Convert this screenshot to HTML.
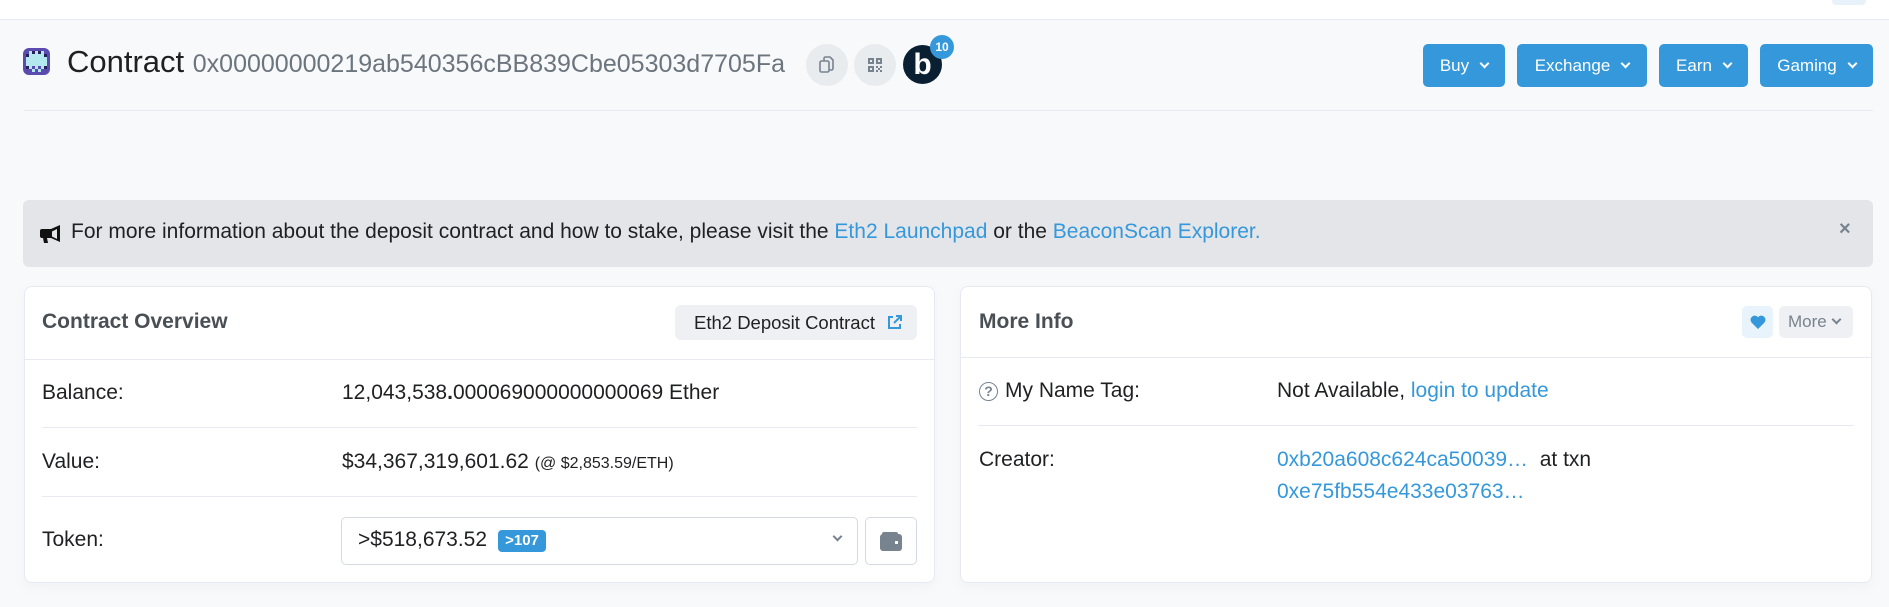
<!DOCTYPE html>
<html><head><meta charset="utf-8"><style>
*{box-sizing:border-box;margin:0;padding:0}
body{width:1889px;height:607px;overflow:hidden;background:#f8f9fa;font-family:"Liberation Sans",Arial,sans-serif;color:#1e2022;position:relative}
.abs{position:absolute}
a{color:#3498db;text-decoration:none}
.top{left:0;top:0;width:1889px;height:20px;background:#fff;border-bottom:1px solid #e7eaf3}
.circ{border-radius:50%;background:#e9ecef;width:42px;height:42px;top:44px;display:flex;align-items:center;justify-content:center}
.btn{top:44px;height:43px;background:#3498db;color:#fff;border-radius:5px;font-size:17px;display:flex;align-items:center;justify-content:center}
.btn span.c{display:inline-block;width:7px;height:7px;border-right:2px solid #fff;border-bottom:2px solid #fff;transform:rotate(45deg);margin-left:12px;margin-top:-5px}
.card{background:#fff;border:1px solid #e7eaf3;border-radius:8px;top:286px;height:297px;box-shadow:0 4px 10px rgba(151,164,175,.08)}
.hd{font-weight:bold;font-size:21px;color:#4a4f55}
.lbl{font-size:21px}
.line{height:1px;background:#e7eaf3}
</style></head><body>
<div class="abs top"></div>
<div class="abs" style="left:1832px;top:0;width:34px;height:5px;background:#e8f2fb;border-radius:0 0 4px 4px"></div>

<svg class="abs" style="left:23px;top:48px" width="27" height="27" viewBox="0 0 9 9">
<rect width="9" height="9" rx="2" fill="#5a4bb0"/>
<rect x="2" y="1" width="5" height="7" fill="#b2e8ee"/>
<rect x="1" y="2" width="7" height="5" fill="#b2e8ee"/>
<rect x="3" y="1" width="1" height="1" fill="#2a1f5c"/><rect x="5" y="1" width="1" height="1" fill="#2a1f5c"/>
<rect x="1" y="2" width="1" height="1" fill="#2a1f5c"/><rect x="7" y="2" width="1" height="1" fill="#2a1f5c"/>
<rect x="1" y="6" width="1" height="1" fill="#2a1f5c"/><rect x="7" y="6" width="1" height="1" fill="#2a1f5c"/>
<rect x="3" y="6" width="1" height="1" fill="#5a4bb0"/><rect x="5" y="6" width="1" height="1" fill="#5a4bb0"/>
<rect x="4" y="7" width="1" height="1" fill="#5a4bb0"/><rect x="2" y="7" width="1" height="1" fill="#5a4bb0"/><rect x="6" y="7" width="1" height="1" fill="#5a4bb0"/>
</svg>
<div class="abs" style="left:67px;top:43px;font-size:31px;color:#1e2022;line-height:38px;white-space:nowrap">Contract <span style="font-size:25px;color:#6c757e">0x00000000219ab540356cBB839Cbe05303d7705Fa</span></div>

<div class="abs circ" style="left:806px"><svg width="16" height="18" viewBox="0 0 16 18" fill="none" stroke="#77838f" stroke-width="1.6"><rect x="1" y="5" width="9" height="11" rx="1.5"/><path d="M5 5V2.5A1.5 1.5 0 0 1 6.5 1H11l3 3v8.5a1.5 1.5 0 0 1-1.5 1.5H10"/></svg></div>
<div class="abs circ" style="left:854px"><svg width="16" height="16" viewBox="0 0 16 16" fill="#77838f"><path d="M1 1h6v6H1zM3 3v2h2V3zM9 1h6v6H9zm2 2v2h2V3zM1 9h6v6H1zm2 2v2h2v-2zM9 9h2v2H9zm4 0h2v2h-2zm-2 2h2v2h-2zm-2 2h2v2H9zm4 0h2v2h-2z"/></svg></div>
<div class="abs" style="left:903px;top:45px;width:39px;height:39px;border-radius:50%;background:#0b1f33;color:#fff;font-size:30px;font-weight:bold;display:flex;align-items:center;justify-content:center;line-height:1">b</div>
<div class="abs" style="left:930px;top:35px;width:24px;height:24px;border-radius:50%;background:#3498db;color:#fff;font-size:12px;font-weight:bold;display:flex;align-items:center;justify-content:center">10</div>

<div class="abs btn" style="left:1423px;width:82px">Buy<span class="c"></span></div>
<div class="abs btn" style="left:1517px;width:130px">Exchange<span class="c"></span></div>
<div class="abs btn" style="left:1659px;width:89px">Earn<span class="c"></span></div>
<div class="abs btn" style="left:1760px;width:113px">Gaming<span class="c"></span></div>
<div class="abs line" style="left:24px;top:110px;width:1849px"></div>

<div class="abs" style="left:23px;top:200px;width:1850px;height:67px;background:#e4e5e9;border-radius:6px"></div>
<svg class="abs" style="left:40px;top:224px" width="24" height="20" viewBox="0 0 24 20"><path d="M20 1v17l-9-4H7l1 5H4l-1-5H2a2 2 0 0 1-2-2V7a2 2 0 0 1 2-2h9z" fill="#111"/><path d="M17 5l-5 2.5v5L17 15z" fill="#e4e5e9"/></svg>
<div class="abs" style="left:71px;top:220px;font-size:21px;white-space:nowrap">For more information about the deposit contract and how to stake, please visit the <a>Eth2 Launchpad</a> or the <a>BeaconScan Explorer.</a></div>
<div class="abs" style="left:1839px;top:218px;font-size:20px;font-weight:bold;color:#77838f">×</div>

<div class="abs card" style="left:24px;width:911px"></div>
<div class="abs hd" style="left:42px;top:310px">Contract Overview</div>
<div class="abs" style="left:675px;top:305px;width:242px;height:35px;background:#eef0f3;border-radius:6px;font-size:18.5px;display:flex;align-items:center;padding-left:19px;white-space:nowrap">Eth2 Deposit Contract
<svg style="margin-left:12px" width="15" height="15" viewBox="0 0 15 15" fill="none" stroke="#3498db" stroke-width="2"><path d="M9 1h5v5M14 1L7 8M6 2H2v11h11V9"/></svg></div>
<div class="abs line" style="left:24px;top:359px;width:911px"></div>
<div class="abs lbl" style="left:42px;top:381px">Balance:</div>
<div class="abs lbl" style="left:342px;top:381px">12,043,538<b>.</b>000069000000000069 Ether</div>
<div class="abs line" style="left:42px;top:427px;width:875px"></div>
<div class="abs lbl" style="left:42px;top:450px">Value:</div>
<div class="abs lbl" style="left:342px;top:450px">$34,367,319,601.62 <span style="font-size:16px">(@ $2,853.59/ETH)</span></div>
<div class="abs line" style="left:42px;top:496px;width:875px"></div>
<div class="abs lbl" style="left:42px;top:528px">Token:</div>
<div class="abs" style="left:341px;top:517px;width:517px;height:48px;border:1px solid #d5dae2;border-radius:5px"></div>
<div class="abs lbl" style="left:358px;top:528px">&gt;$518,673.52</div>
<div class="abs" style="left:498px;top:530px;width:48px;height:22px;background:#3498db;color:#fff;font-size:15px;font-weight:bold;border-radius:4px;text-align:center;line-height:22px">&gt;107</div>
<div class="abs" style="left:834px;top:533px;width:7px;height:7px;border-right:2px solid #77838f;border-bottom:2px solid #77838f;transform:rotate(45deg)"></div>
<div class="abs" style="left:865px;top:517px;width:52px;height:48px;border:1px solid #d5dae2;border-radius:5px;display:flex;align-items:center;justify-content:center"><svg width="22" height="19" viewBox="0 0 22 19"><rect x="0" y="2" width="22" height="17" rx="3" fill="#77838f"/><rect x="2" y="0" width="16" height="4" rx="2" fill="#77838f"/><rect x="15" y="9" width="3" height="3" fill="#fff"/></svg></div>

<div class="abs card" style="left:960px;width:912px"></div>
<div class="abs hd" style="left:979px;top:310px">More Info</div>
<div class="abs" style="left:1742px;top:306px;width:31px;height:32px;background:#e8f3fc;border-radius:5px;display:flex;align-items:center;justify-content:center"><svg width="16" height="14" viewBox="0 0 16 14"><path d="M8 14L1.5 7.5A4 4 0 0 1 8 2.2 4 4 0 0 1 14.5 7.5z" fill="#3498db"/></svg></div>
<div class="abs" style="left:1779px;top:306px;width:74px;height:32px;background:#eef0f3;border-radius:5px;font-size:17px;color:#77838f;display:flex;align-items:center;padding-left:9px">More<span style="display:inline-block;width:7px;height:7px;border-right:2px solid #77838f;border-bottom:2px solid #77838f;transform:rotate(45deg);margin:-5px 0 0 6px"></span></div>
<div class="abs line" style="left:960px;top:357px;width:912px"></div>
<div class="abs" style="left:979px;top:382px;width:19px;height:19px;border:1.8px solid #77838f;border-radius:50%;font-size:14px;font-weight:bold;color:#77838f;text-align:center;line-height:16px">?</div>
<div class="abs lbl" style="left:1005px;top:379px">My Name Tag:</div>
<div class="abs lbl" style="left:1277px;top:379px">Not Available, <a>login to update</a></div>
<div class="abs line" style="left:978px;top:425px;width:876px"></div>
<div class="abs lbl" style="left:979px;top:448px">Creator:</div>
<div class="abs lbl" style="left:1277px;top:448px"><a>0xb20a608c624ca50039…</a> &nbsp;at txn</div>
<div class="abs lbl" style="left:1277px;top:480px"><a>0xe75fb554e433e03763…</a></div>
</body></html>
